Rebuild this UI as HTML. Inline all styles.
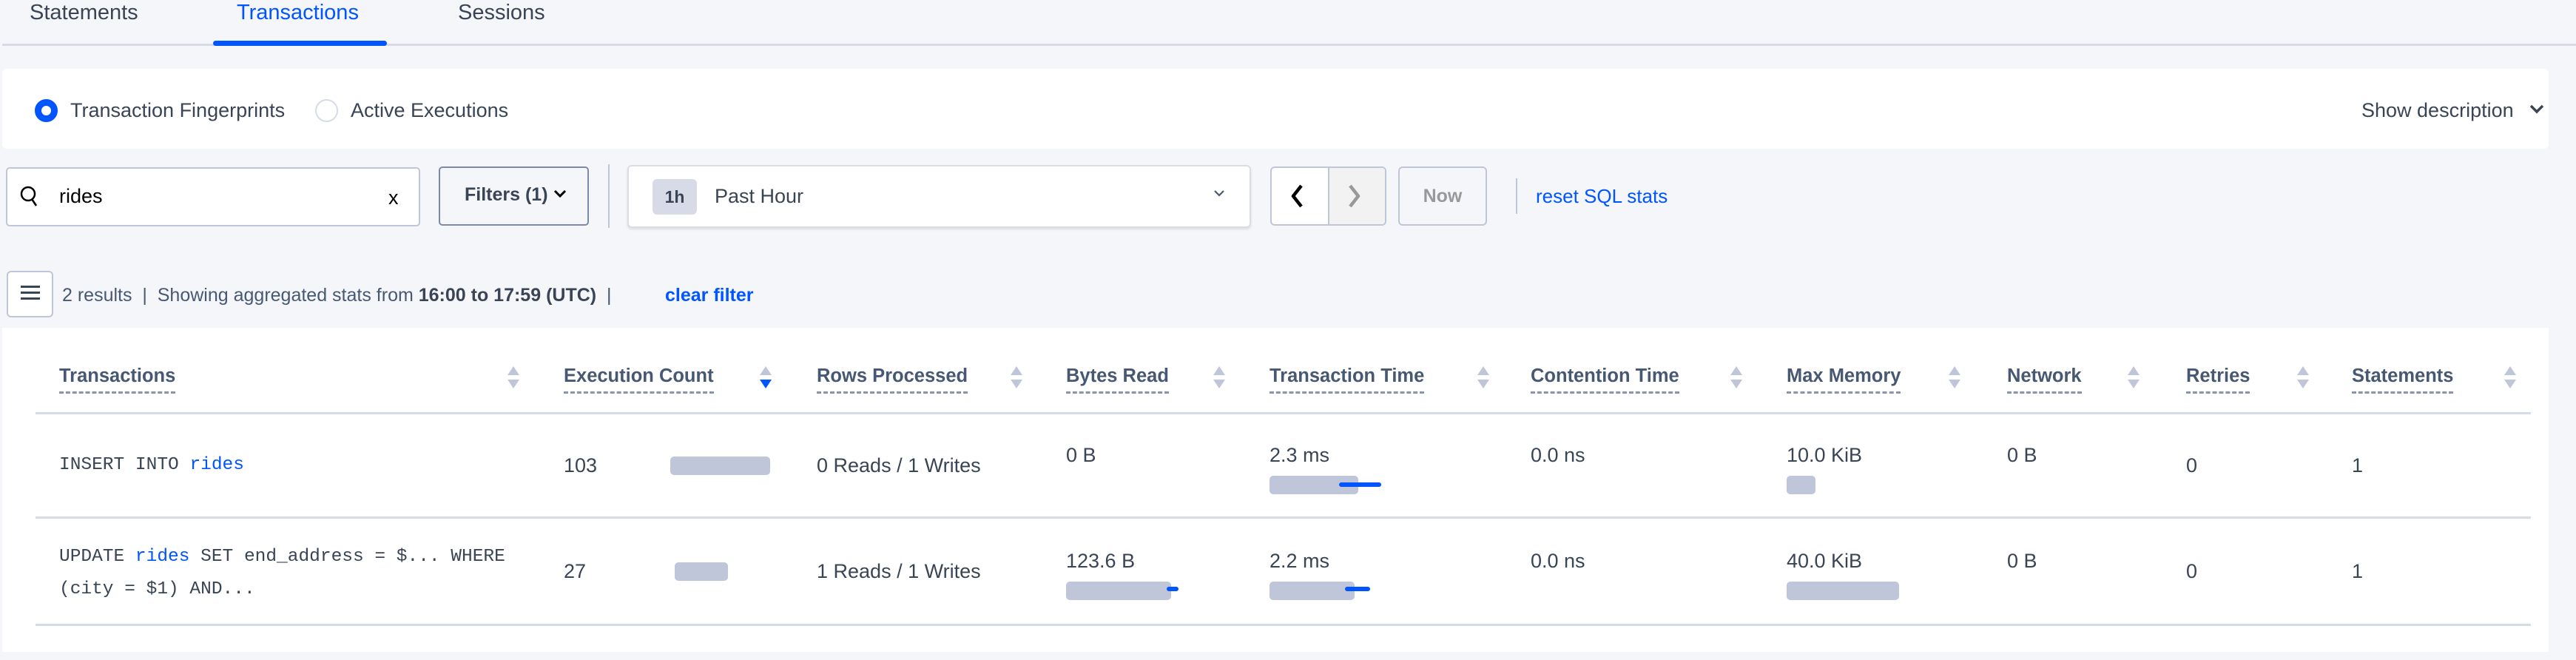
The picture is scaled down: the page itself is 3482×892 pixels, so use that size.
<!DOCTYPE html>
<html><head><meta charset="utf-8"><style>
*{margin:0;padding:0;box-sizing:border-box}
body{width:3482px;height:892px;background:#f5f6fa;position:relative;overflow:hidden;font-family:"Liberation Sans",sans-serif;color:#394455}
.a{position:absolute;white-space:nowrap}
.t{font-size:27px;line-height:30px}
.h{font-size:25.5px;font-weight:bold;color:#475872;line-height:30px;border-bottom:3px dashed #8a94ad;padding-bottom:6px}
.m{font-family:"Liberation Mono",monospace;font-size:24.5px;color:#394455;line-height:44px}
.b{color:#0055ff}
.bar{position:absolute;background:#c0c6d9;border-radius:5px;height:25px}
.bl{position:absolute;background:#0055ff;height:6px;border-radius:3px}
.s{position:absolute;width:16px}
.s:before{content:"";position:absolute;left:0;top:0;border-left:8px solid transparent;border-right:8px solid transparent;border-bottom:12px solid #c0c6d9}
.s:after{content:"";position:absolute;left:0;top:18px;border-left:8px solid transparent;border-right:8px solid transparent;border-top:12px solid #c0c6d9}
.s.d:after{border-top-color:#0055ff}
.line{position:absolute;left:48px;width:3373px;height:3px;background:#d6dbe7}
</style></head><body>
<div class="a t" style="left:40px;top:2px;font-size:29px;color:#394455">Statements</div>
<div class="a t" style="left:320px;top:2px;font-size:29px;color:#0055ff">Transactions</div>
<div class="a t" style="left:619px;top:2px;font-size:29px;color:#394455">Sessions</div>
<div class="a" style="left:3px;top:59px;width:3479px;height:3px;background:#d6dbe7"></div>
<div class="a" style="left:288px;top:55px;width:235px;height:7px;background:#0055ff;border-radius:4px"></div>

<div class="a" style="left:3px;top:93px;width:3442px;height:108px;background:#fff;border-radius:6px"></div>
<div class="a" style="left:47px;top:134px;width:31px;height:31px;border-radius:50%;border:9px solid #0055ff;background:#fff"></div>
<div class="a t" style="left:95px;top:134px;color:#394455">Transaction Fingerprints</div>
<div class="a" style="left:426px;top:134px;width:31px;height:31px;border-radius:50%;border:2px solid #d6dbe7"></div>
<div class="a t" style="left:474px;top:134px">Active Executions</div>
<div class="a t" style="left:3192px;top:134px;font-size:27px">Show description</div>
<svg class="a" style="left:3418px;top:140px" width="22" height="16"><path d="M3 3 L11 11 L19 3" stroke="#394455" stroke-width="3.5" fill="none"/></svg>

<div class="a" style="left:8px;top:226px;width:560px;height:80px;background:#fff;border:2px solid #c0c6d9;border-radius:5px"></div>
<svg class="a" style="left:26px;top:250px" width="28" height="32"><circle cx="12" cy="12" r="9" stroke="#000" stroke-width="2.5" fill="none"/><path d="M17 19 L23 28" stroke="#000" stroke-width="2.5"/></svg>
<div class="a t" style="left:80px;top:250px;color:#000">rides</div>
<div class="a t" style="left:525px;top:252px;color:#000">x</div>
<div class="a" style="left:593px;top:225px;width:203px;height:80px;border:2px solid #7e89a9;border-radius:5px;background:#f5f6fa"></div>
<div class="a t" style="left:628px;top:248px;font-weight:bold;color:#394455;font-size:25px">Filters (1)</div>
<svg class="a" style="left:748px;top:255px" width="18" height="14"><path d="M2 3 L9 10 L16 3" stroke="#000" stroke-width="3" fill="none"/></svg>
<div class="a" style="left:822px;top:222px;width:2px;height:86px;background:#c0c6d9"></div>
<div class="a" style="left:848px;top:223px;width:843px;height:85px;background:#fff;border:2px solid #dcdde3;border-radius:6px;box-shadow:0 2px 3px #ddd"></div>
<div class="a" style="left:882px;top:242px;width:60px;height:48px;background:#d6dbe7;border-radius:6px;font-size:23px;font-weight:bold;line-height:48px;text-align:center;color:#394455">1h</div>
<div class="a t" style="left:966px;top:250px;color:#394455">Past Hour</div>
<svg class="a" style="left:1640px;top:256px" width="16" height="12"><path d="M2 2 L8 8 L14 2" stroke="#475872" stroke-width="2.2" fill="none"/></svg>
<div class="a" style="left:1717px;top:225px;width:157px;height:80px;border:2px solid #c0c6d9;border-radius:6px;background:#fff;overflow:hidden"><div style="position:absolute;left:76px;top:0;width:81px;height:80px;background:#f2f2f2;border-left:2px solid #c0c6d9"></div></div>
<svg class="a" style="left:1743px;top:248px" width="20" height="34"><path d="M16 3 L5 17 L16 31" stroke="#000" stroke-width="4.5" fill="none" stroke-linejoin="round"/></svg>
<svg class="a" style="left:1821px;top:248px" width="20" height="34"><path d="M4 3 L15 17 L4 31" stroke="#999" stroke-width="4.5" fill="none" stroke-linejoin="round"/></svg>
<div class="a" style="left:1890px;top:225px;width:120px;height:80px;border:2px solid #c0c6d9;border-radius:6px;color:#999;font-weight:bold;font-size:25px;line-height:76px;text-align:center">Now</div>
<div class="a" style="left:2049px;top:241px;width:2px;height:48px;background:#c0c6d9"></div>
<div class="a t" style="left:2076px;top:250px;color:#0055ff;font-size:26px">reset SQL stats</div>

<div class="a" style="left:9px;top:366px;width:63px;height:63px;border:2px solid #c0c6d9;border-radius:6px;background:#fff"></div>
<div class="a" style="left:28px;top:386px;width:26px;height:3px;background:#394455;box-shadow:0 8px 0 #394455,0 16px 0 #394455"></div>
<div class="a" style="left:84px;top:384px;font-size:25px;line-height:30px;color:#475872">2 results &nbsp;| &nbsp;Showing aggregated stats from <b style="color:#394455">16:00 to 17:59 (UTC)</b> &nbsp;| </div>
<div class="a" style="left:899px;top:384px;font-size:25px;line-height:30px;color:#0055ff;font-weight:bold">clear filter</div>

<div class="a" style="left:3px;top:443px;width:3442px;height:438px;background:#fff"></div>
<div class="a h" style="left:80px;top:493px">Transactions</div><div class="s" style="left:686px;top:495px"></div>
<div class="a h" style="left:762px;top:493px">Execution Count</div><div class="s d" style="left:1027px;top:495px"></div>
<div class="a h" style="left:1104px;top:493px">Rows Processed</div><div class="s" style="left:1366px;top:495px"></div>
<div class="a h" style="left:1441px;top:493px">Bytes Read</div><div class="s" style="left:1640px;top:495px"></div>
<div class="a h" style="left:1716px;top:493px">Transaction Time</div><div class="s" style="left:1997px;top:495px"></div>
<div class="a h" style="left:2069px;top:493px">Contention Time</div><div class="s" style="left:2339px;top:495px"></div>
<div class="a h" style="left:2415px;top:493px">Max Memory</div><div class="s" style="left:2634px;top:495px"></div>
<div class="a h" style="left:2713px;top:493px">Network</div><div class="s" style="left:2876px;top:495px"></div>
<div class="a h" style="left:2955px;top:493px">Retries</div><div class="s" style="left:3105px;top:495px"></div>
<div class="a h" style="left:3179px;top:493px">Statements</div><div class="s" style="left:3385px;top:495px"></div>
<div class="line" style="top:557px"></div>

<div class="a m" style="left:80px;top:607px">INSERT INTO <span class="b">rides</span></div>
<div class="a t" style="left:762px;top:614px">103</div>
<div class="bar" style="left:906px;top:617px;width:135px"></div>
<div class="a t" style="left:1104px;top:614px">0 Reads / 1 Writes</div>
<div class="a t" style="left:1441px;top:600px">0 B</div>
<div class="a t" style="left:1716px;top:600px">2.3 ms</div>
<div class="bar" style="left:1716px;top:643px;width:120px"></div><div class="bl" style="left:1810px;top:652px;width:57px"></div>
<div class="a t" style="left:2069px;top:600px">0.0 ns</div>
<div class="a t" style="left:2415px;top:600px">10.0 KiB</div>
<div class="bar" style="left:2415px;top:643px;width:39px"></div>
<div class="a t" style="left:2713px;top:600px">0 B</div>
<div class="a t" style="left:2955px;top:614px">0</div>
<div class="a t" style="left:3179px;top:614px">1</div>
<div class="line" style="top:698px"></div>

<div class="a m" style="left:80px;top:731px">UPDATE <span class="b">rides</span> SET end_address = $... WHERE<br>(city = $1) AND...</div>
<div class="a t" style="left:762px;top:757px">27</div>
<div class="bar" style="left:912px;top:760px;width:72px"></div>
<div class="a t" style="left:1104px;top:757px">1 Reads / 1 Writes</div>
<div class="a t" style="left:1441px;top:743px">123.6 B</div>
<div class="bar" style="left:1441px;top:786px;width:142px"></div><div class="bl" style="left:1577px;top:793px;width:16px"></div>
<div class="a t" style="left:1716px;top:743px">2.2 ms</div>
<div class="bar" style="left:1716px;top:786px;width:115px"></div><div class="bl" style="left:1818px;top:793px;width:34px"></div>
<div class="a t" style="left:2069px;top:743px">0.0 ns</div>
<div class="a t" style="left:2415px;top:743px">40.0 KiB</div>
<div class="bar" style="left:2415px;top:786px;width:152px"></div>
<div class="a t" style="left:2713px;top:743px">0 B</div>
<div class="a t" style="left:2955px;top:757px">0</div>
<div class="a t" style="left:3179px;top:757px">1</div>
<div class="line" style="top:843px"></div>
</body></html>
